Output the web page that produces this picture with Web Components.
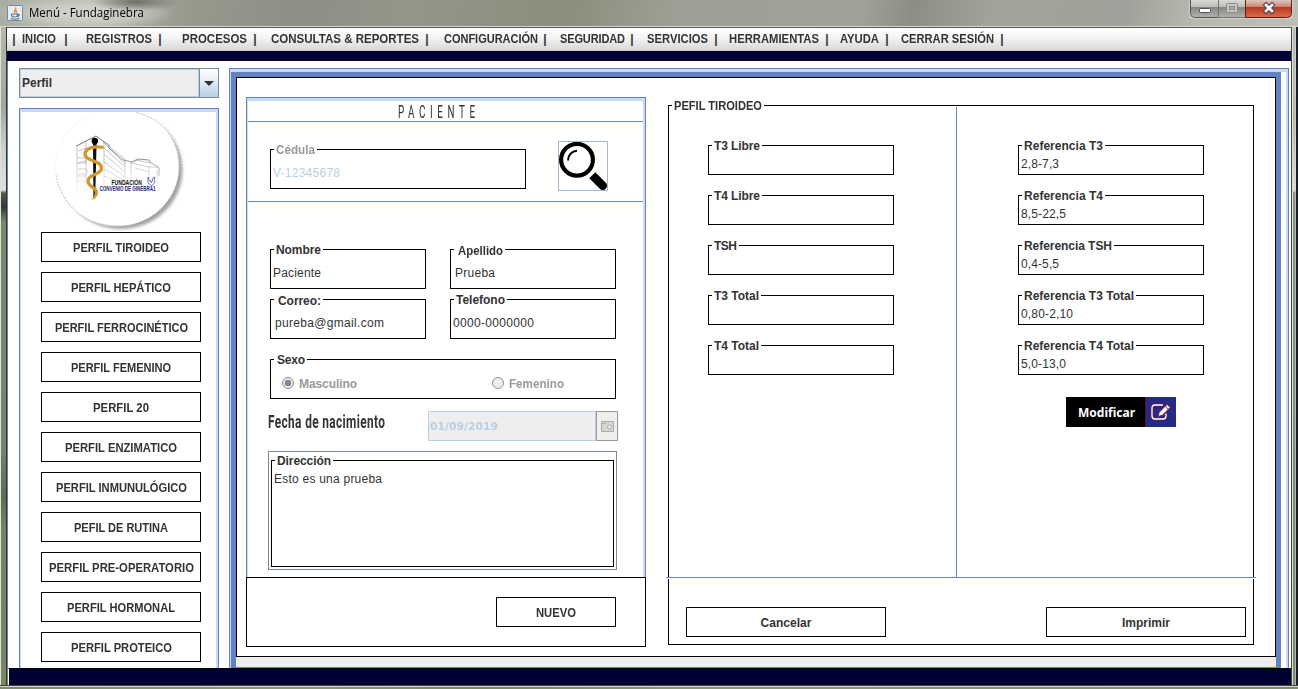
<!DOCTYPE html>
<html lang="es">
<head>
<meta charset="utf-8">
<title>Menú - Fundaginebra</title>
<style>
html,body{margin:0;padding:0}
body{width:1298px;height:689px;overflow:hidden;font:12px/16px "Liberation Sans",Arial,sans-serif;color:#333}
</style>
</head>
<body>
<app-window></app-window>
<script>
function define(name, html, setup){
  const t=document.createElement('template'); t.innerHTML=html;
  customElements.define(name, class extends HTMLElement{
    connectedCallback(){
      if(this.shadowRoot) return;
      this.attachShadow({mode:'open'}).append(t.content.cloneNode(true));
      if(setup) setup(this,this.shadowRoot);
    }
  });
}

/* A line of text fitted to a given width; "squeeze" narrows its glyphs. */
define('ui-text', `<style>:host{display:block;white-space:pre;flex:none}span{display:inline-block;transform-origin:0 50%;white-space:pre}</style><span><slot></slot></span>`,
 (el,root)=>{
  const w=+el.getAttribute('w'), span=root.querySelector('span');
  if(!w) return;
  const natural=span.getBoundingClientRect().width, n=el.textContent.length;
  let s=+(el.getAttribute('squeeze')||0);
  if(!s) s=w<natural-1?Math.max(.92,w/natural):1;
  span.style.letterSpacing=((w/s-natural)/Math.max(1,n-1))+'px';
  if(s!==1) span.style.transform='scaleX('+s+')';
  el.style.width=w+'px';
 });

/* Bordered box whose caption interrupts the top border. */
define('titled-box', `<style>
:host{display:block;box-sizing:border-box;border:1px solid #000;height:var(--h,30px);background:#fff}
.cap{width:fit-content;height:16px;margin:-8px 0 0 3px;padding:0 2px 0 var(--lp,2px);background:#fff;font-weight:bold;color:var(--cap,#333)}
.cap ui-text{position:relative;top:var(--ly,0)}
.body{margin:var(--vy,2px) 0 0 var(--vx,2px);color:var(--val,#333)}
</style><div class="cap"></div><div class="body"><slot></slot></div>`,
 (el,root)=>{
  const t=document.createElement('ui-text');
  t.setAttribute('w',el.getAttribute('cw')); t.textContent=el.getAttribute('caption');
  root.querySelector('.cap').append(t);
 });

define('push-button', `<style>
:host{display:flex;box-sizing:border-box;width:160px;height:30px;border:1px solid #000;background:#fff;align-items:flex-start;justify-content:center;font-weight:bold;flex:none;padding-top:7px;line-height:16px}
</style><slot></slot>`);

define('menu-item', `<style>
:host{display:flex;flex:none;font-weight:bold}
i{font-style:normal;width:2px;display:flex;justify-content:center}
</style><slot></slot><i>|</i>`,
 (el,root)=>{ el.style.marginLeft=el.getAttribute('before')+'px'; root.querySelector('i').style.marginLeft=(el.getAttribute('gap')-1)+'px'; });

define('main-menu', `<style>
:host{display:flex;box-sizing:border-box;height:24px;padding:3px 0 0 6px;background:linear-gradient(#fff,#f6f6f6 40%,#dcdcdc 92%);border-bottom:1px solid #c8c8c8;border-top:1px solid #555}
b{width:2px;display:flex;justify-content:center}
</style><b>|</b>
<menu-item before="7" gap="10"><ui-text w="34">INICIO</ui-text></menu-item>
<menu-item before="19" gap="8"><ui-text w="66">REGISTROS</ui-text></menu-item>
<menu-item before="21" gap="8"><ui-text w="65">PROCESOS</ui-text></menu-item>
<menu-item before="15" gap="8"><ui-text w="148">CONSULTAS &amp; REPORTES</ui-text></menu-item>
<menu-item before="16" gap="7"><ui-text w="94">CONFIGURACIÓN</ui-text></menu-item>
<menu-item before="14" gap="7"><ui-text w="65">SEGURIDAD</ui-text></menu-item>
<menu-item before="14" gap="8"><ui-text w="61">SERVICIOS</ui-text></menu-item>
<menu-item before="12" gap="8"><ui-text w="90">HERRAMIENTAS</ui-text></menu-item>
<menu-item before="12" gap="8"><ui-text w="39">AYUDA</ui-text></menu-item>
<menu-item before="13" gap="8"><ui-text w="93">CERRAR SESIÓN</ui-text></menu-item>`);

define('title-bar', `<style>
:host{display:flex;justify-content:space-between;box-sizing:border-box;height:27px;border-bottom:1px solid #d6d8d2;
background:radial-gradient(ellipse 44px 9px at 136px 2px,#6d6f67 0,#7b7d7599 50%,transparent 100%),radial-gradient(ellipse 90px 18px at 85px 13px,#d5d8d0 0,#c5c8bf 55%,transparent 100%),linear-gradient(100deg,#a9ada2 0,#b3b6ab 90px,#97998d 190px,#8c8f84 300px,#94968a 400px,#8b8e7b 560px,#9fa095 670px,#a1a197 850px,#8d8d85 900px,#a2a39b 980px,#a0a19a 1110px,#b6b9b0 1180px,#bcc0b6 1298px)}
.l{display:flex;padding:5px 0 0 7px;gap:6px;color:#000;font:12px/16px "Open Sans","Noto Sans",sans-serif}
.r{display:block;margin-right:5px}
svg{display:block}
</style>
<div class="l"><svg width="16" height="16"><rect x=".5" y=".5" width="15" height="15" rx="1" fill="#e6edf3" stroke="#71899e"/><path d="M8.500 2.500c1.500 2-2.500 2.700-.7 5M10 5.500c-1.800 1-.9 1.600-.4 2.400" stroke="#e8761d" stroke-width="1.200" fill="none"/><path d="M4.500 9h6c0 3-1 3-3 3s-3-.2-3-3M10.500 9.500c3-.8 2 2-.5 1.800M3.500 13.500c3 .9 7 .8 9-.3" stroke="#4d7596" stroke-width="1.200" fill="none"/></svg><ui-text w="115">Menú - Fundaginebra</ui-text></div>
<svg class="r" width="104" height="19" viewBox="0 0 104 19">
<defs><linearGradient id="g" x2="0" y2="1"><stop stop-color="#dedfdc"/><stop offset=".45" stop-color="#bbbcb8"/><stop offset=".46" stop-color="#85867f"/><stop offset="1" stop-color="#b2b4ad"/></linearGradient>
<linearGradient id="d" x2="0" y2="1"><stop stop-color="#dcd0ca"/><stop offset=".4" stop-color="#cf8a7a"/><stop offset=".46" stop-color="#b83a23"/><stop offset="1" stop-color="#df6c45"/></linearGradient></defs>
<path d="M.5-1v15.500q0 4 4 4h95q4 0 4-4v-15.500z" fill="#e4e6e1"/>
<path d="M1.500-1v14.500q0 4 4 4h24v-18.500z" fill="url(#g)" stroke="#53544f"/><path d="M29.500-1h27v18.500h-27z" fill="url(#g)" stroke="#73746e"/><path d="M56.500-1h46v14.500q0 4-4 4h-42z" fill="url(#d)" stroke="#5c1d17"/>
<rect x="10.500" y="8.500" width="11" height="4" rx="1" fill="#fff" stroke="#4d5068"/>
<rect x="37.500" y="3.500" width="11" height="9" rx="1" fill="#c6c7c3" stroke="#8c8d88"/><rect x="40.500" y="6.500" width="5" height="3" fill="#aaa" stroke="#8c8d88"/>
<path d="M77 5l6 6M83 5l-6 6" stroke="#51475a" stroke-width="4.800" stroke-linecap="square"/><path d="M77 5l6 6M83 5l-6 6" stroke="#fff" stroke-width="2.600" stroke-linecap="square"/></svg>`);

define('profile-select', `<style>
:host{display:flex;box-sizing:border-box;width:200px;height:30px;border:1px solid #7a8a99;font-weight:bold}
.v{flex:1;border:1px solid #b8cfe5;background:#eee;padding:5px 0 0 1px}
.b{width:18px;display:grid;place-items:center;border-left:1px solid #7a8a99;background:linear-gradient(#fff,#e5eef7 40%,#b8cfe5)}
</style><div class="v"><ui-text w="30">Perfil</ui-text></div><div class="b"><svg width="10" height="5"><path d="M0 0h10l-5 5z" fill="#333"/></svg></div>`);

define('brand-logo', `<style>:host{display:block}svg{display:block}</style>
<svg width="194" height="120" viewBox="21 112 194 120">
<defs><filter id="s" x="-20%" y="-20%" width="140%" height="140%"><feGaussianBlur stdDeviation="1.500"/></filter><linearGradient id="m" x2="0" y2="1"><stop offset=".45" stop-color="#fff"/><stop offset="1" stop-color="#fff" stop-opacity="0"/></linearGradient><mask id="k"><rect x="60" y="130" width="110" height="66" fill="url(#m)"/></mask></defs>
<ellipse cx="121" cy="170" rx="61.500" ry="59" fill="#a4a4a4" filter="url(#s)"/>
<ellipse cx="117" cy="166" rx="62.300" ry="60.300" fill="#fff"/>
<path d="M136 112.500c27 6 44 29 43 57-1 31-28 56-59 56.500-35 0-58-20-64-51" fill="none" stroke="#999" stroke-width=".6" stroke-dasharray="2 1"/><path d="M55 170c0-26 14-47 36-54" fill="none" stroke="#ccc" stroke-width=".6" stroke-dasharray="1 3"/>
<g fill="none" stroke="#aaa" stroke-width=".7" mask="url(#k)">
<path d="M77 146v48M77 146l19-10 14 11 15 12v32M86 141v50M78 151l8-3M78 158h8v5h-8M78 169h9v5h-9M78 181h9M77 163l9-2M77 176h9M103 142l22 22M103 147l22 20M104 154l21 18M103 161l22 16M104 169l21 12M104 176l20 8M104 141v44M131 162v26M131 163l18 4h9M149 167v24M135 168l14 4M157 170v20M131 163l5-3 15 3"/>
<path d="M76 146l20-10 13 9v3l14 12 9 2 6-3 11 1 1 2 9 6v8" stroke="#666"/></g>
<path d="M93 143h3.600l-1.400 54-.9 2-.9-2z" fill="#111"/><circle cx="94.800" cy="141" r="3.200" fill="#000"/>
<path d="M103.500 147.500C93 145.500 85 149 85 154C85 161.500 101.500 160 101.500 168C101.500 175 88 174 88 181C88 187 96.500 187 96.500 192.500" stroke="#d0982f" stroke-width="3.300" fill="none"/>
<path d="M98.100 192Q98 198 91 200Q95 196 94.900 192z" fill="#d0982f"/>
<text x="111.500" y="184.700" textLength="30.500" lengthAdjust="spacingAndGlyphs" font-family="Liberation Sans,sans-serif" font-weight="bold" font-size="6.500" fill="#111">FUNDACIÓN</text>
<text x="99.500" y="191.200" textLength="56" lengthAdjust="spacingAndGlyphs" font-family="Liberation Sans,sans-serif" font-weight="bold" font-size="6.500" fill="#23237d">CONVENIO DE GINEBRA1</text>
<path d="M148 177l1 3 3 2 1-4 2-1-1 3 1 2-3 4-4-3zM150 181l2 2" fill="none" stroke="#5a5ab8" stroke-width=".8"/></svg>`);

define('side-bar', `<style>
:host{display:block;width:200px;flex:none}
.p{margin-top:10px;box-sizing:border-box;height:560px;border:1px solid #6382bf;border-bottom:0}
.q{border:solid #c8ddf2;border-width:3px 2px 0 1px;height:556px;overflow:hidden}
.list{display:flex;flex-direction:column;gap:10px;padding-left:20px}
</style><profile-select></profile-select>
<div class="p"><div class="q"><brand-logo></brand-logo><div class="list">
<push-button><ui-text w="96">PERFIL TIROIDEO</ui-text></push-button>
<push-button><ui-text w="100">PERFIL HEPÁTICO</ui-text></push-button>
<push-button><ui-text w="133">PERFIL FERROCINÉTICO</ui-text></push-button>
<push-button><ui-text w="100">PERFIL FEMENINO</ui-text></push-button>
<push-button><ui-text w="56">PERFIL 20</ui-text></push-button>
<push-button><ui-text w="112">PERFIL ENZIMATICO</ui-text></push-button>
<push-button><ui-text w="131">PERFIL INMUNULÓGICO</ui-text></push-button>
<push-button><ui-text w="94">PEFIL DE RUTINA</ui-text></push-button>
<push-button><ui-text w="145">PERFIL PRE-OPERATORIO</ui-text></push-button>
<push-button><ui-text w="108">PERFIL HORMONAL</ui-text></push-button>
<push-button><ui-text w="101">PERFIL PROTEICO</ui-text></push-button>
</div></div></div>`);

define('radio-option', `<style>:host{display:flex;align-items:center;gap:5px;color:#999;font-weight:bold;height:16px}svg{display:block}circle.dot{display:none}:host([checked]) circle.dot{display:block}</style>
<svg width="12" height="12"><circle cx="6" cy="6" r="5.500" fill="#eee" stroke="#8f8f8f"/><circle class="dot" cx="6" cy="6" r="3.300" fill="#7a8a99"/></svg><slot></slot>`);

define('patient-panel', `<style>
:host{display:block;width:400px;flex:none}
.p{box-sizing:border-box;height:480px;border:1px solid #6382bf;border-bottom:0}
.q{box-sizing:border-box;height:479px;border:solid #c8ddf2;border-width:3px 2px 0 1px}
.title{box-sizing:border-box;height:21px;border-bottom:1px solid #6382bf;padding-left:150px;font:400 19px/21px Roboto,sans-serif}
.search{display:flex;box-sizing:border-box;height:80px;border-bottom:1px solid #6382bf;padding-left:22px}
.search titled-box{width:256px;margin-top:27px;--h:40px;--vy:7px;--cap:#999;--val:#b8cfe5}
.mag{width:48px;height:48px;border:1px solid #a3b8cc;margin:19px 0 0 32px}
svg{display:block}
.form{padding:47px 22px 0}
.grid{display:grid;grid-template-columns:156px 166px;gap:10px 24px;--h:40px;--vy:7px}
.sexo{width:346px;margin-top:20px;--h:40px;--lp:3px;--vy:7px;--vx:11px}
.radios{display:flex;gap:135px}
.radios ui-text{padding-top:1px}
.date{display:flex;margin:12px 0 0 -2px;height:30px}
.date .lb{width:160px;font:bold 18px/22px Roboto,sans-serif}
.in{box-sizing:border-box;width:168px;border:1px solid #b8cfe5;background:#eee;color:#b8cfe5;font:bold 11px/29px "DejaVu Sans",sans-serif;padding-left:1px}
.cal{box-sizing:border-box;width:22px;border:1px solid #999;background:#eee;display:grid;place-items:center}
.dir{margin:10px 0 0 -2px;box-sizing:border-box;width:349px;height:119px;border:1px solid #7a8a99;padding:8px 2px 2px;--h:107px}
.foot{box-sizing:border-box;height:70px;border:1px solid #000;padding:19px 0 0 249px}
.foot push-button{width:120px}
</style>
<div class="p"><div class="q">
<div class="title"><ui-text w="77" squeeze=".52">PACIENTE</ui-text></div>
<div class="search"><titled-box caption="Cédula" cw="39"><ui-text w="67">V-12345678</ui-text></titled-box>
<div class="mag"><svg width="48" height="48" viewBox="559 142 48 48"><circle cx="577" cy="159.800" r="15.900" fill="#fff" stroke="#000" stroke-width="4.200"/><path d="M568 160.500a9.500 9.500 0 0 1 9-9.800" fill="none" stroke="#000" stroke-width="2"/><path d="M589.300 178.200l6-6 10.500 10.500a4.200 4.200 0 0 1-6 6z" fill="#000"/></svg></div></div>
<div class="form">
<div class="grid">
<titled-box caption="Nombre" cw="45"><ui-text w="48">Paciente</ui-text></titled-box>
<titled-box caption="Apellido" cw="45" style="--lp:4px;--ly:1px;--vx:4px"><ui-text w="40">Prueba</ui-text></titled-box>
<titled-box caption="Correo:" cw="43" style="--lp:4px;--ly:1px;--vx:4px"><ui-text w="109">pureba@gmail.com</ui-text></titled-box>
<titled-box caption="Telefono" cw="49"><ui-text w="81">0000-0000000</ui-text></titled-box>
</div>
<titled-box class="sexo" caption="Sexo" cw="28"><div class="radios"><radio-option checked><ui-text w="58">Masculino</ui-text></radio-option><radio-option><ui-text w="55">Femenino</ui-text></radio-option></div></titled-box>
<div class="date"><div class="lb"><ui-text w="117" squeeze=".66">Fecha de nacimiento</ui-text></div><div class="in"><ui-text w="68">01/09/2019</ui-text></div><div class="cal"><svg width="13" height="11"><path d="M.5.500h12v10h-12z" fill="#d5d5d5" stroke="#aaa"/><path d="M1 2.500h4" stroke="#aaa"/><circle cx="8.500" cy="6" r="2" fill="#eee" stroke="#aaa"/></svg></div></div>
<div class="dir"><titled-box caption="Dirección" cw="54"><ui-text w="108">Esto es una prueba</ui-text></titled-box></div>
</div></div></div>
<div class="foot"><push-button><ui-text w="40">NUEVO</ui-text></push-button></div>`);

define('edit-button', `<style>
:host{display:flex;width:110px;height:30px;background:#000;color:#fff;font:bold 12px/31px "Noto Sans",sans-serif}
.t{width:67px;padding-left:12px}
.i{width:30px;border-left:1px solid #5a1020;background:#252b84;display:grid;place-items:center}
svg{display:block}
</style><div class="t"><ui-text w="57">Modificar</ui-text></div>
<div class="i"><svg width="22" height="18" viewBox="0 0 22 18"><g fill="none" stroke-linecap="round" stroke-linejoin="round"><path d="M12.500 2H5Q2 2 2 5v8q0 3 3 3h8q3 0 3-3v-2" stroke="#7c2034" stroke-width="2.600"/><path d="M12.500 2H5Q2 2 2 5v8q0 3 3 3h8q3 0 3-3v-2" stroke="#fff" stroke-width="1.300"/></g><path d="M8 13.500l1.300-4.300L17 1.400l3.300 2.800-7.800 8z" fill="#fff" stroke="#7c2034" stroke-width="1"/><path d="M15.300 3.500l2.800 2.500" stroke="#a02030" stroke-width=".9"/></svg></div>`);

define('thyroid-panel', `<style>
:host{display:block;width:586px;margin:8px 0 0 22px}
.outer{--h:540px;--vy:-7px;--vx:0}
.cols{display:grid;grid-template-columns:287px 1fr;height:470px;--h:30px;--vy:2px;--vx:2px}
.c{display:flex;flex-direction:column;gap:20px;padding:38px 0 0 39px}
.c+.c{border-left:1px solid #6382bf;padding-left:61px}
.c titled-box{width:186px}
edit-button{margin:2px 0 0 48px}
.line{position:relative;height:1px;margin:0 -3px;background:#6382bf;border-bottom:1px solid #fff}
.act{display:flex;justify-content:space-between;padding:28px 7px 0 17px}
.act push-button{width:200px}
</style>
<titled-box class="outer" caption="PEFIL TIROIDEO" cw="88">
<div class="cols"><div class="c">
<titled-box caption="T3 Libre" cw="46"></titled-box>
<titled-box caption="T4 Libre" cw="46"></titled-box>
<titled-box caption="TSH" cw="23"></titled-box>
<titled-box caption="T3 Total" cw="45"></titled-box>
<titled-box caption="T4 Total" cw="45"></titled-box>
</div><div class="c">
<titled-box caption="Referencia T3" cw="79"><ui-text w="38">2,8-7,3</ui-text></titled-box>
<titled-box caption="Referencia T4" cw="79"><ui-text w="45">8,5-22,5</ui-text></titled-box>
<titled-box caption="Referencia TSH" cw="88"><ui-text w="38">0,4-5,5</ui-text></titled-box>
<titled-box caption="Referencia T3 Total" cw="110"><ui-text w="52">0,80-2,10</ui-text></titled-box>
<titled-box caption="Referencia T4 Total" cw="110"><ui-text w="45">5,0-13,0</ui-text></titled-box>
<edit-button></edit-button>
</div></div>
<div class="line"></div>
<div class="act"><push-button><ui-text w="51">Cancelar</ui-text></push-button><push-button><ui-text w="48">Imprimir</ui-text></push-button></div>
</titled-box>`);

define('work-area', `<style>
:host{display:block;box-sizing:border-box;width:1060px;height:600px;border:1px solid #6382bf;border-bottom:0;flex:none}
.a{border:solid #c8ddf2;border-width:3px 2px 0 1px;padding-right:5px}
.b{border:5px solid #6382bf;border-bottom:0}
.c{display:flex;box-sizing:border-box;height:580px;border:1px solid #000;padding:19px 0 0 9px;background:#fff}
.d{height:10px;background:#eee;border-bottom:1px solid #6382bf}
</style><div class="a"><div class="b"><div class="c"><patient-panel></patient-panel><thyroid-panel></thyroid-panel></div><div class="d"></div></div></div>`);

define('app-window', `<style>
:host{display:block;width:1298px;height:689px;background:#7d8a6b}
.mid{display:grid;grid-template-columns:7px 1284px 7px;height:658px}
.l,.r{box-sizing:border-box}
.l{border-left:1px solid #dfe1dc;border-right:1px solid #333;background:linear-gradient(#b3b7ac 0,#a2a69b 80px,#cdd0c7 120px,#dfe1dc 163px,#555a4c 166px,#34382f 180px,#7c876c 195px,#76846a 420px,#5f6b50 470px,#74845f 500px,#788662)}
.r{border-left:1px solid #444;border-right:2px solid #1d2026;background:linear-gradient(90deg,#dcded9 1px,transparent 1px 3px,#dcded988 3px),linear-gradient(#b9bdb3 0,#b4b8ad 90px,#dadcd6 163px,#8a957b 166px,#7e8b6c)}
.navy{height:10px;background:#000033}
.content{display:flex;gap:10px;box-sizing:border-box;height:607px;padding:7px 0 0 11px;border-left:1px solid #6382bf;background:#fff}
.foot{height:16px;margin-left:1px;border-left:1px solid #fff;border-top:1px solid #000;background:#000033}
.bot{height:4px;box-sizing:border-box;border-top:1px solid #444;background:linear-gradient(#d2d5cc 1px,transparent 1px),linear-gradient(90deg,#7c8a68,#8a9675 300px,#77855f 480px,#8a9675 700px,#7d8a6b)}
</style>
<title-bar></title-bar>
<div class="mid"><div class="l"></div><div><main-menu></main-menu><div class="navy"></div><div class="content"><side-bar></side-bar><work-area></work-area></div><div class="foot"></div></div><div class="r"></div></div>
<div class="bot"></div>`);
</script>
</body>
</html>
